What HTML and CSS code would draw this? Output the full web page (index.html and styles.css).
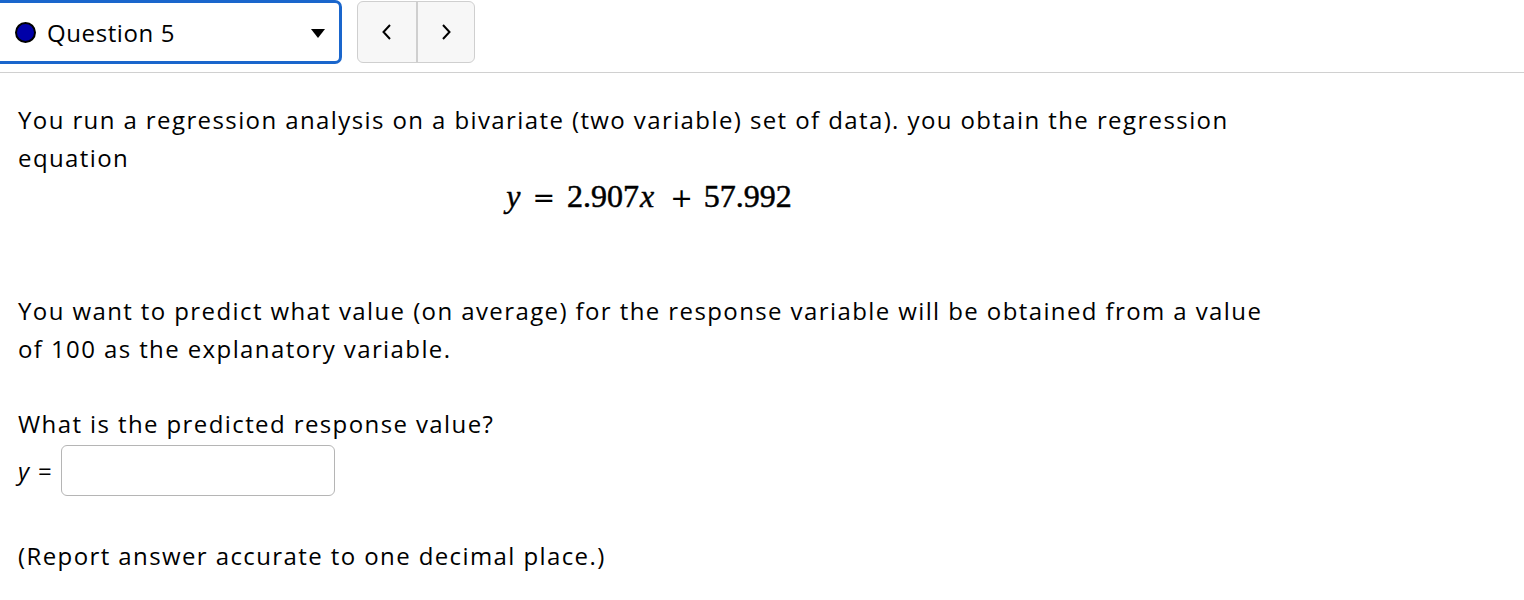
FILE: index.html
```html
<!DOCTYPE html>
<html>
<head>
<meta charset="utf-8">
<link rel="stylesheet" href="styles.css">
</head>
<body>
<header class="topbar">
  <div class="qselect">
    <span class="dot"></span>
    <span class="qlabel">Question 5</span>
    <span class="caret"></span>
  </div>
  <div class="nav">
    <button class="navbtn" aria-label="Previous">
      <svg width="14" height="18" viewBox="0 0 14 18"><path d="M10 2 L3.5 9 L10 16" fill="none" stroke="#000" stroke-width="2"/></svg>
    </button>
    <button class="navbtn" aria-label="Next">
      <svg width="14" height="18" viewBox="0 0 14 18"><path d="M4 2 L10.5 9 L4 16" fill="none" stroke="#000" stroke-width="2"/></svg>
    </button>
  </div>
</header>
<main class="content">
  <p class="para">You run a regression analysis on a bivariate (two variable) set of data). you obtain the regression equation</p>
  <div class="math"><i>y</i><span class="op eq">=</span>2.907<i class="vx">x</i><span class="op plus">+</span>57.992</div>
  <p class="para p2">You want to predict what value (on average) for the response variable will be obtained from a value of 100 as the explanatory variable.</p>
  <p class="para p3">What is the predicted response value?</p>
  <div class="answer"><span class="lbl"><i>y</i> =</span><input class="field" type="text"></div>
  <p class="para p4">(Report answer accurate to one decimal place.)</p>
</main>
</body>
</html>
```
FILE: styles.css
```css
html, body {
  margin: 0;
  padding: 0;
  background: #fff;
  color: #000;
  font-family: "Open Sans", "Noto Sans", sans-serif;
}
.topbar {
  display: flex;
  align-items: flex-start;
  gap: 15px;
  height: 72px;
  border-bottom: 1px solid #d0d0d0;
}
.qselect {
  box-sizing: border-box;
  width: 342px;
  height: 64px;
  border: 3px solid #1a66cc;
  border-left: none;
  border-radius: 0 7px 7px 0;
  display: flex;
  align-items: center;
  padding-left: 15px;
  padding-right: 14px;
}
.dot {
  width: 17px;
  height: 17px;
  border-radius: 50%;
  background: #0000a8;
  border: 2.5px solid #000;
  flex: none;
}
.qlabel {
  font-size: 24px;
  letter-spacing: 0.6px;
  margin-left: 11px;
  flex: 1;
}
.caret {
  width: 0;
  height: 0;
  border-left: 7px solid transparent;
  border-right: 7px solid transparent;
  border-top: 9px solid #000;
  margin-top: 2px;
}
.nav {
  display: flex;
  margin-top: 1px;
  height: 62px;
  box-sizing: border-box;
  border: 1px solid #cfcfcf;
  border-radius: 6px;
  background: #f7f7f7;
  overflow: hidden;
}
.navbtn {
  width: 58px;
  height: 100%;
  border: none;
  background: transparent;
  display: flex;
  align-items: center;
  justify-content: center;
  padding: 0;
}
.navbtn + .navbtn {
  border-left: 2px solid #cfcfcf;
}
.content {
  padding: 28px 0 0 18px;
  width: 1262px;
  font-size: 24px;
  line-height: 38px;
  letter-spacing: 1.4px;
}
.para {
  margin: 0;
}
.math {
  text-align: center;
  font-family: "Liberation Serif", serif;
  font-size: 32px;
  line-height: 38px;
  height: 38px;
  letter-spacing: 0;
  -webkit-text-stroke: 0.5px #000;
}
.math i {
  -webkit-text-stroke: 0.4px #000;
}
.math .vx {
  margin-left: 1px;
  margin-right: 4px;
}
.math .op {
  font-family: "DejaVu Sans", sans-serif;
  font-size: 27px;
  -webkit-text-stroke: 0;
}
.math .eq {
  margin: 0 12px 0 12px;
}
.math .plus {
  margin: 0 11px 0 12px;
}
.p2 {
  margin-top: 77px;
}
.p3 {
  margin-top: 37px;
}
.answer {
  display: flex;
  align-items: center;
  margin-top: 2px;
}
.lbl {
  font-size: 24px;
  margin-right: 8px;
}
.lbl i {
  font-style: italic;
}
.field {
  box-sizing: border-box;
  width: 274px;
  height: 51px;
  border: 1px solid #b5b5b5;
  border-radius: 6px;
  font-size: 24px;
}
.p4 {
  margin-top: 41px;
}
```
